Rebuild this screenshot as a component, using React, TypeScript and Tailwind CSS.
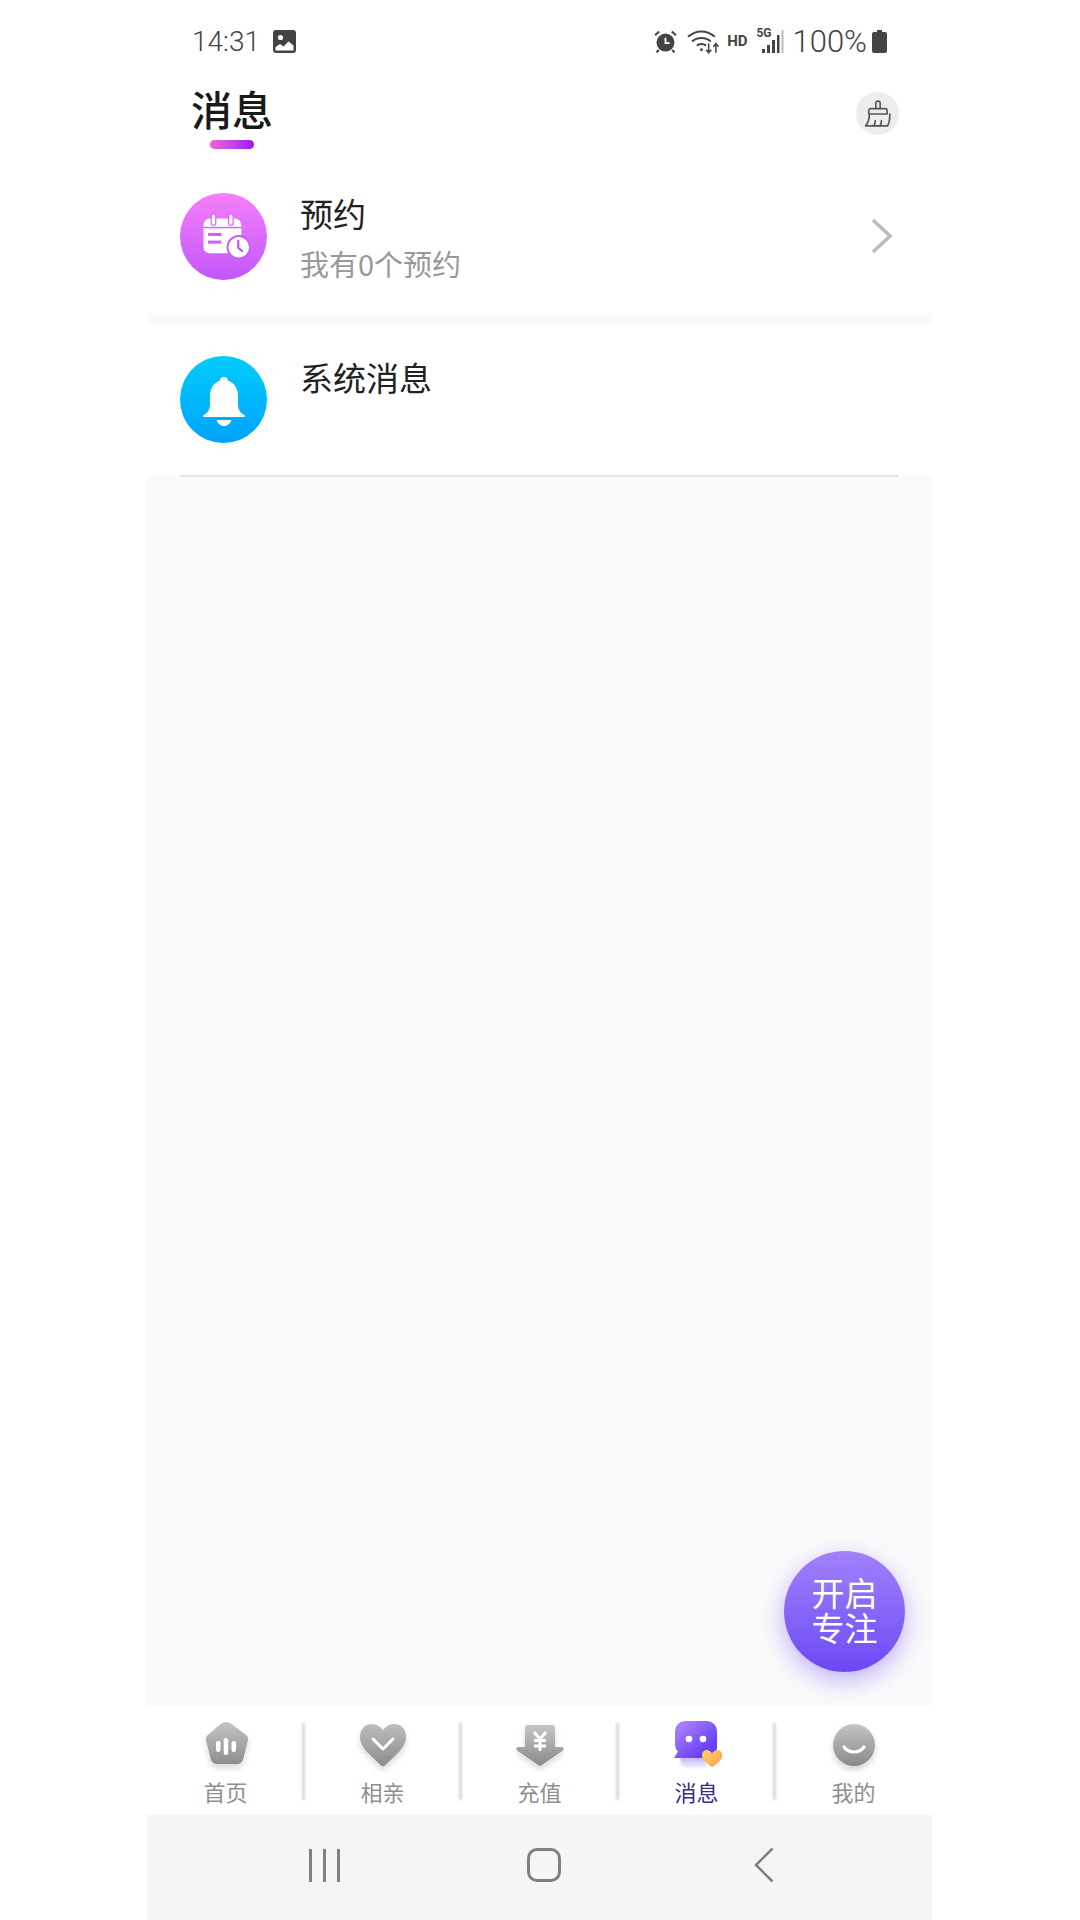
import React from 'react';

const cjk = 'font-["Noto_Sans_CJK_SC",sans-serif]';

function StatusBar() {
  return (
    <div className="h-[70px] pl-[45px] pr-[45px] pt-[12px] flex items-center justify-between text-[#444]">
      <div className="flex items-center gap-[13px]">
        <span className='font-["Roboto",sans-serif] text-[28px] font-light leading-none mt-[2px]'>14:31</span>
        <svg width="23" height="23" viewBox="0 0 23 23">
          <rect width="23" height="23" rx="3" fill="#444" />
          <circle cx="7.500" cy="7.500" r="2.600" fill="#fff" />
          <path d="M2.500 20.500v-3.500l4.500-3 3.500 2.500 5-5 5 4v5z" fill="#fff" />
        </svg>
      </div>
      <div className="flex items-center">
        <svg width="23" height="23" viewBox="0 0 22 22" className="mr-[10px]">
          <circle cx="11" cy="12" r="8.600" fill="#444" />
          <path d="M11 7.500v5h4" stroke="#fff" strokeWidth="1.700" fill="none" />
          <path d="M1 5l4-3.500M21 5l-4-3.500M4.500 19l-2 2.500M17.500 19l2 2.500" stroke="#444" strokeWidth="2" />
        </svg>
        <svg width="33" height="27" viewBox="0 0 32 26" className="mr-[7px]" fill="none" stroke="#444" strokeWidth="2">
          <path d="M1 8.500c7.500-7 18.500-7 26 0" />
          <path d="M5 13c5-4.500 13-4.500 18 0" />
          <path d="M9.500 17c2.500-2 6.500-2 9 0" />
          <circle cx="14" cy="21" r="1.400" fill="#444" stroke="none" />
          <path d="M21 15v9m-2.500-3 2.500 3 2.500-3M28 24v-9m-2.500 3 2.500-3 2.500 3" strokeWidth="1.500" />
        </svg>
        <span className='font-["Roboto",sans-serif] text-[15px] font-bold leading-none mr-[9px]'>HD</span>
        <div className="relative w-[28px] h-[26px] mr-[8px]">
          <span className='absolute left-0 -top-[1px] font-["Roboto",sans-serif] text-[12px] font-bold leading-none'>5G</span>
          <svg width="28" height="26" viewBox="0 0 28 26" className="absolute inset-0">
            <rect x="6" y="21" width="3" height="4" fill="#444" />
            <rect x="11" y="17" width="3" height="8" fill="#444" />
            <rect x="16" y="12" width="3" height="13" fill="#444" />
            <rect x="21" y="7" width="2.500" height="18" fill="#444" />
            <rect x="25.500" y="2" width="2" height="23" fill="#bbb" />
          </svg>
        </div>
        <span className='font-["Roboto",sans-serif] text-[31px] font-light leading-none mr-[5px]'>100%</span>
        <svg width="15" height="23" viewBox="0 0 15 23">
          <path d="M5 0h5v2h3a2 2 0 0 1 2 2v17a2 2 0 0 1-2 2H2a2 2 0 0 1-2-2V4a2 2 0 0 1 2-2h3z" fill="#444" />
        </svg>
      </div>
    </div>
  );
}

function BrushIcon() {
  return (
    <svg width="28" height="28" viewBox="0 0 26 26" fill="none" stroke="#555" strokeWidth="1.500" strokeLinejoin="round" strokeLinecap="round">
      <path d="M11 8V3a2 2 0 0 1 4 0v5" />
      <path d="M4.500 13V10a2 2 0 0 1 2-2h13a2 2 0 0 1 2 2v3z" />
      <path d="M5 13c0 4-1 8-3.500 11H22c1.500-3 2-7 2-11" />
      <path d="M9 24c1-1.500 1.500-3 1.500-5M15 24c.8-1.500 1.200-3 1.200-5" />
    </svg>
  );
}

function CalendarIcon() {
  return (
    <svg width="47" height="48" viewBox="0 0 46 46">
      <rect x="0.500" y="5" width="37" height="34" rx="6" fill="#fff" />
      <rect x="8" y="0.500" width="4.500" height="11" rx="2.200" fill="#fff" stroke="#d668f8" strokeWidth="1.200" />
      <rect x="25" y="0.500" width="4.500" height="11" rx="2.200" fill="#fff" stroke="#d668f8" strokeWidth="1.200" />
      <rect x="0.500" y="13" width="37" height="1.500" fill="#d668f8" />
      <rect x="5" y="19" width="13" height="3" fill="#cf60f8" />
      <rect x="5" y="26.500" width="13" height="3" fill="#cf60f8" />
      <circle cx="35" cy="33" r="11" fill="#fff" stroke="#ca5cf6" strokeWidth="1.800" />
      <path d="M34.500 26v7.500l4.500 4" stroke="#b94ff0" strokeWidth="2" fill="none" />
    </svg>
  );
}

function BellIcon() {
  return (
    <svg width="42" height="50" viewBox="0 0 42 50" fill="#fff">
      <path d="M21 0c2.500 0 4 1.700 4.200 3.700C32 6 35 12 35 19v8c0 5 1.800 8.500 5.500 10.500.9.500 1.500 1.200 1.500 1.800 0 .5-.5.700-1.200.700H1.200C.5 40 0 39.800 0 39.300c0-.6.600-1.300 1.500-1.800C5.200 35.500 7 32 7 27v-8C7 12 10 6 16.800 3.700 17 1.700 18.500 0 21 0z" />
      <path d="M13.500 43h15c-1.200 3.500-4 6-7.500 6s-6.300-2.500-7.500-6z" />
    </svg>
  );
}

function HomeIcon() {
  return (
    <svg width="54" height="54" viewBox="0 0 54 54">
      <defs>
        <linearGradient id="grayA" x1="0" y1="0" x2="0" y2="1">
          <stop offset="0" stopColor="#c4c4c4" />
          <stop offset="1" stopColor="#8e8e8e" />
        </linearGradient>
        <filter id="softA" x="-30%" y="-30%" width="160%" height="170%">
          <feDropShadow dx="0" dy="4" stdDeviation="3" floodColor="#000" floodOpacity="0.14" />
        </filter>
      </defs>
      <path d="M21.500 4a9 9 0 0 1 11 0l14 10.500a6 6 0 0 1 2.300 6.500l-4.500 18a7 7 0 0 1-6.500 5H18.200a7 7 0 0 1-6.500-5l-4.500-18a6 6 0 0 1 2.300-6.500z" fill="url(#grayA)" filter="url(#softA)" />
      <rect x="17" y="21" width="4.500" height="11" rx="2.200" fill="#fff" />
      <rect x="24.700" y="18" width="4.500" height="17" rx="2.200" fill="#fff" />
      <rect x="32.500" y="21" width="4.500" height="11" rx="2.200" fill="#fff" />
    </svg>
  );
}

function HeartIcon() {
  return (
    <svg width="54" height="54" viewBox="0 0 54 54">
      <defs>
        <linearGradient id="grayB" x1="0" y1="0" x2="0" y2="1">
          <stop offset="0" stopColor="#bdbdbd" />
          <stop offset="1" stopColor="#8c8c8c" />
        </linearGradient>
        <filter id="softB" x="-30%" y="-30%" width="160%" height="170%">
          <feDropShadow dx="0" dy="4" stdDeviation="3" floodColor="#000" floodOpacity="0.14" />
        </filter>
      </defs>
      <path d="M27 10c3-4 7-6 11-6 8 0 12 6 12 13 0 6-3 10-7 15L29.500 45a3.500 3.500 0 0 1-5 0L11 32c-4-5-7-9-7-15C4 10 8 4 16 4c4 0 8 2 11 6z" fill="url(#grayB)" filter="url(#softB)" />
      <path d="M17 19l10 10 10-10" fill="none" stroke="#fff" strokeWidth="3" strokeLinecap="round" strokeLinejoin="round" />
    </svg>
  );
}

function RechargeIcon() {
  return (
    <svg width="54" height="54" viewBox="0 0 54 54">
      <defs>
        <linearGradient id="grayC" x1="0" y1="0" x2="0" y2="1">
          <stop offset="0" stopColor="#c6c6c6" />
          <stop offset="1" stopColor="#8a8a8a" />
        </linearGradient>
        <filter id="softC" x="-30%" y="-30%" width="160%" height="170%">
          <feDropShadow dx="0" dy="4" stdDeviation="3" floodColor="#000" floodOpacity="0.14" />
        </filter>
      </defs>
      <path d="M12 8a3 3 0 0 1 3-3h24a3 3 0 0 1 3 3v19h6c2.500 0 3.500 2 2 3.500L29.500 44.500a3.500 3.500 0 0 1-5 0L4 30.500C2.500 29 3.500 27 6 27h6z" fill="url(#grayC)" filter="url(#softC)" />
      <path d="M21 12l6 7 6-7M27 19v12M21 20.500h12M21 26h12" fill="none" stroke="#fff" strokeWidth="3" />
    </svg>
  );
}

function ChatIcon() {
  return (
    <svg width="54" height="54" viewBox="0 0 54 54">
      <defs>
        <linearGradient id="chat" x1="0" y1="0" x2="1" y2="1">
          <stop offset="0" stopColor="#b58cfb" />
          <stop offset="0.75" stopColor="#6a42f6" />
        </linearGradient>
        <linearGradient id="chatBase" x1="0" y1="0" x2="0" y2="1">
          <stop offset="0" stopColor="#c3b0fb" />
          <stop offset="1" stopColor="#f3eefe" />
        </linearGradient>
        <linearGradient id="gold" x1="0" y1="0" x2="1" y2="1">
          <stop offset="0" stopColor="#ffd268" />
          <stop offset="1" stopColor="#f9a14a" />
        </linearGradient>
        <filter id="soft" x="-20%" y="-40%" width="140%" height="180%">
          <feGaussianBlur stdDeviation="1" />
        </filter>
      </defs>
      <path d="M10 37h26v8a3 3 0 0 1-3 3H16c-3 0-6-4-6-11z" fill="url(#chatBase)" filter="url(#soft)" />
      <path d="M15 1h22a10 10 0 0 1 10 10v17a10 10 0 0 1-10 10H4l4-6.500A10 10 0 0 1 5 25V11A10 10 0 0 1 15 1z" fill="url(#chat)" />
      <circle cx="19" cy="19" r="3.300" fill="#fff" />
      <circle cx="33" cy="19" r="3.300" fill="#fff" />
      <path d="M42 33.500c1.500-2.300 3.500-3.500 5.500-3.500 3 0 4.800 2.300 4.800 5.300 0 2.700-1.300 4.700-3.500 6.700l-5 4.300a2.500 2.500 0 0 1-3.300 0l-5-4.300c-2.200-2-3.500-4-3.500-6.700 0-3 1.800-5.300 4.800-5.300 2 0 4 1.200 5.200 3.500z" fill="url(#gold)" />
    </svg>
  );
}

function MineIcon() {
  return (
    <svg width="54" height="54" viewBox="0 0 54 54">
      <defs>
        <linearGradient id="grayE" x1="0" y1="0" x2="0" y2="1">
          <stop offset="0" stopColor="#c4c4c4" />
          <stop offset="1" stopColor="#8a8a8a" />
        </linearGradient>
        <filter id="softE" x="-30%" y="-30%" width="160%" height="170%">
          <feDropShadow dx="0" dy="4" stdDeviation="3" floodColor="#000" floodOpacity="0.16" />
        </filter>
      </defs>
      <circle cx="27" cy="25" r="21" fill="url(#grayE)" filter="url(#softE)" />
      <path d="M17 27c2.500 3.500 6 5 10 5s7.500-1.500 10-5" fill="none" stroke="#fff" strokeWidth="3.200" strokeLinecap="round" />
    </svg>
  );
}

const tabs = [
  { label: '首页', icon: <HomeIcon /> },
  { label: '相亲', icon: <HeartIcon /> },
  { label: '充值', icon: <RechargeIcon /> },
  { label: '消息', icon: <ChatIcon />, active: true },
  { label: '我的', icon: <MineIcon /> },
];

export default function App() {
  return (
    <div className={`w-[1080px] h-[1920px] bg-white flex pl-[147px] ${cjk}`}>
      <div className="relative w-[785px] h-full flex flex-col bg-[#fafafb]">
        <div className="bg-white">
          <StatusBar />
          <div className="h-[85px] pl-[45px] pr-[33px] flex items-start justify-between">
            <div className="flex flex-col items-center w-[80px]">
              <span className="text-[41px] font-medium leading-[48px] mt-[14px] text-[#1a1a1a] whitespace-nowrap">消息</span>
              <div className="w-[44px] h-[9px] mt-[8px] rounded-full bg-gradient-to-r from-[#ee63d5] to-[#a000f5]" />
            </div>
            <div className="w-[43px] h-[43px] mt-[22px] rounded-full bg-[#ededed] flex items-center justify-center">
              <BrushIcon />
            </div>
          </div>
        </div>

        <div className="h-[158px] bg-white flex items-start pl-[33px] pr-[39px] pt-[38px]">
          <div className="w-[87px] h-[87px] rounded-full bg-gradient-to-b from-[#f57ffb] to-[#c355fb] flex items-center justify-center">
            <div className="pl-[6px]"><CalendarIcon /></div>
          </div>
          <div className="flex-1 ml-[33px] -mt-[3px]">
            <div className="text-[33px] leading-[46px] text-[#222]">预约</div>
            <div className="text-[29px] leading-[40px] mt-[7px] text-[#999]">我有0个预约</div>
          </div>
          <svg width="22" height="36" viewBox="0 0 22 36" fill="none" stroke="#bbb" strokeWidth="3.500" className="mt-[25px]">
            <path d="M2 2l17 16L2 34" />
          </svg>
        </div>

        <div className="h-[152px] mt-[11px] bg-white pl-[33px] pr-[34px] pt-[32px]">
          <div className="flex items-start">
            <div className="w-[87px] h-[87px] rounded-full bg-gradient-to-b from-[#02cdfb] to-[#00a2fe] flex items-center justify-center">
              <div className="pt-[4px]"><BellIcon /></div>
            </div>
            <div className="ml-[33px] text-[33px] leading-[46px] -mt-[2px] text-[#222]">系统消息</div>
          </div>
        </div>
        <div className="mx-[33px] -mt-[1px] h-[2px] bg-[#e6e6e6]" />

        <div className="flex-1" />

        <div className="h-[109px] bg-white flex">
          {tabs.map((tab, i) => (
            <div key={tab.label} className="relative flex-1 flex flex-col items-center pt-[14px]">
              {tab.icon}
              <span className={`text-[22px] leading-[28px] mt-[3px] ${tab.active ? 'text-[#3d2a86]' : 'text-[#8f8f8f]'}`}>{tab.label}</span>
              {i < 4 && <div className="absolute -right-[1px] top-[17px] w-[3px] h-[77px] bg-[#d8d8d8] blur-[1px]" />}
            </div>
          ))}
        </div>

        <div className="h-[105px] bg-[#f5f5f7] flex items-center pb-[5px]">
          <div className="ml-[162px] flex gap-[11px]">
            <div className="w-[3px] h-[33px] bg-[#808080]" />
            <div className="w-[3px] h-[33px] bg-[#808080]" />
            <div className="w-[3px] h-[33px] bg-[#808080]" />
          </div>
          <div className="ml-[187px] w-[34px] h-[34px] rounded-[10px] border-[3px] border-[#808080]" />
          <svg width="20" height="36" viewBox="0 0 20 36" fill="none" stroke="#808080" strokeWidth="2.500" className="ml-[193px]">
            <path d="M18.500 1.500L2 18l16.500 16.500" />
          </svg>
        </div>

        <div className="absolute left-[637px] top-[1551px] w-[121px] h-[121px] rounded-full bg-gradient-to-b from-[#a281fb] to-[#6d47f3] shadow-[0_8px_24px_rgba(125,85,245,0.45)] flex items-center justify-center">
          <div className="text-white text-[33px] leading-[35px] text-center -mt-[4px] whitespace-nowrap">
            <div>开启</div>
            <div>专注</div>
          </div>
        </div>
      </div>
    </div>
  );
}
